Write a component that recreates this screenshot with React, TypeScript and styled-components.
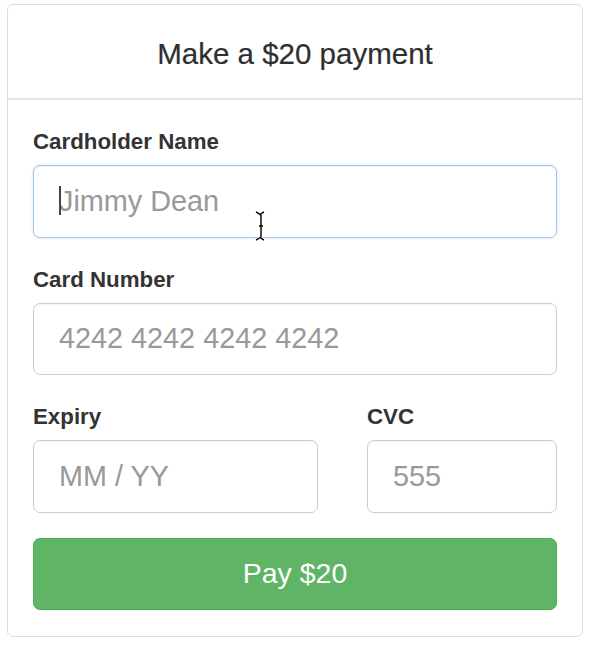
import React from "react";
import styled, { createGlobalStyle, css } from "styled-components";

const Global = createGlobalStyle`
  html, body { margin: 0; padding: 0; background: #fff; }
  body { font-family: "Liberation Sans", Arial, Helvetica, sans-serif; color: #333; }
  * { box-sizing: border-box; }
`;

const Page = styled.div`
  padding: 4px 9px 10px 7px;
`;

const Card = styled.div`
  width: 576px;
  border: 1px solid #dddddd;
  border-radius: 6px;
  background: #fff;
`;

const Header = styled.div`
  height: 95px;
  border-bottom: 2px solid #e3e3e3;
  display: flex;
  align-items: center;
  justify-content: center;
`;

const Title = styled.h3`
  margin: 0;
  font-size: 29.5px;
  font-weight: 400;
  color: #2f2f2f;
  padding-top: 4px;
  -webkit-text-stroke: 0.2px #2f2f2f;
`;

const Body = styled.form`
  padding: 26px 25px 26px 25px;
  display: flex;
  flex-direction: column;
  gap: 26px;
`;

const Row = styled.div`
  display: grid;
  grid-template-columns: 285px 190px;
  justify-content: space-between;
`;

const Group = styled.div`
  display: flex;
  flex-direction: column;
  gap: 8px;
`;

const Label = styled.label`
  font-size: 22.3px;
  font-weight: 700;
  line-height: 31px;
  color: #333;
`;

const Field = styled.div`
  position: relative;
`;

const Input = styled.input<{ $focused?: boolean }>`
  display: block;
  width: 100%;
  height: 72.5px;
  padding: 0 25px;
  font-family: "Liberation Sans", Arial, Helvetica, sans-serif;
  font-size: 28.8px;
  color: #555;
  border: 1px solid #cccccc;
  border-radius: 7px;
  background: #fff;
  outline: none;
  box-shadow: inset 0 1px 1px rgba(0, 0, 0, 0.04);
  &::placeholder { color: #999; }
  ${(p) =>
    p.$focused &&
    css`
      border-color: #a6c8e6;
      box-shadow: inset 0 1px 1px rgba(0, 0, 0, 0.05), 0 0 3px rgba(102, 175, 233, 0.35);
    `}
`;

const Caret = styled.span`
  position: absolute;
  left: 26px;
  top: 21px;
  width: 2px;
  height: 29px;
  background: #444;
`;

const MouseCursor = styled.svg`
  position: absolute;
  left: 222px;
  top: 46px;
  pointer-events: none;
`;

const PayButton = styled.button`
  height: 72px;
  width: 100%;
  margin-top: -1px;
  border: 1px solid #4cae4c;
  border-radius: 7px;
  background: #5fb466;
  color: #fff;
  font-family: "Liberation Sans", Arial, Helvetica, sans-serif;
  font-size: 28.5px;
  cursor: pointer;
`;

const beam =
  "M1 1 L3 2 L5 3.5 L7 2 L9 1 M6 3.5 V26.5 M1 29 L3 28 L5 26.5 L7 28 L9 29 M4 15 H8";

export default function App() {
  return (
    <Page>
      <Global />
      <Card>
        <Header>
          <Title>Make a $20 payment</Title>
        </Header>
        <Body onSubmit={(e) => e.preventDefault()}>
          <Group>
            <Label>Cardholder Name</Label>
            <Field>
              <Input $focused placeholder="Jimmy Dean" />
              <Caret />
              <MouseCursor width="12" height="30" viewBox="0 0 12 30">
                <path d={beam} stroke="#fff" strokeWidth="3" fill="none" />
                <path d={beam} stroke="#000" strokeWidth="1.4" fill="none" />
              </MouseCursor>
            </Field>
          </Group>
          <Group>
            <Label>Card Number</Label>
            <Input placeholder="4242 4242 4242 4242" />
          </Group>
          <Row>
            <Group>
              <Label>Expiry</Label>
              <Input placeholder="MM / YY" />
            </Group>
            <Group>
              <Label>CVC</Label>
              <Input placeholder="555" />
            </Group>
          </Row>
          <PayButton type="submit">Pay $20</PayButton>
        </Body>
      </Card>
    </Page>
  );
}
